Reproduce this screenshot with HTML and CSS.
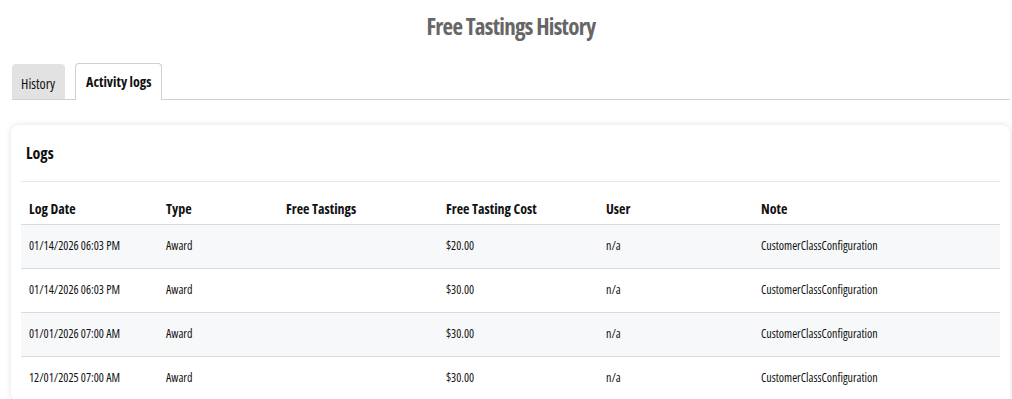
FILE: index.html
```html
<!DOCTYPE html>
<html>
<head>
    <meta charset="utf-8">
    <meta name="viewport" content="width=device-width, initial-scale=1">
    <title>Free Tastings History</title>
    <link rel="stylesheet" href="styles.css">
</head>
<body>
    <h1 class="page-title">Free Tastings History</h1>

    <div class="tabs">
        <div class="tab">History</div>
        <div class="tab active">Activity logs</div>
    </div>

    <div class="card">
        <h2 class="card-title">Logs</h2>
        <table class="logs">
            <thead>
                <tr>
                    <th class="c-date">Log Date</th>
                    <th class="c-type">Type</th>
                    <th class="c-free">Free Tastings</th>
                    <th class="c-cost">Free Tasting Cost</th>
                    <th class="c-user">User</th>
                    <th>Note</th>
                </tr>
            </thead>
            <tbody>
                <tr>
                    <td>01/14/2026 06:03 PM</td>
                    <td>Award</td>
                    <td></td>
                    <td>$20.00</td>
                    <td>n/a</td>
                    <td>CustomerClassConfiguration</td>
                </tr>
                <tr>
                    <td>01/14/2026 06:03 PM</td>
                    <td>Award</td>
                    <td></td>
                    <td>$30.00</td>
                    <td>n/a</td>
                    <td>CustomerClassConfiguration</td>
                </tr>
                <tr>
                    <td>01/01/2026 07:00 AM</td>
                    <td>Award</td>
                    <td></td>
                    <td>$30.00</td>
                    <td>n/a</td>
                    <td>CustomerClassConfiguration</td>
                </tr>
                <tr>
                    <td>12/01/2025 07:00 AM</td>
                    <td>Award</td>
                    <td></td>
                    <td>$30.00</td>
                    <td>n/a</td>
                    <td>CustomerClassConfiguration</td>
                </tr>
            </tbody>
        </table>
    </div>
</body>
</html>
```

FILE: styles.css
```css
body {
    margin: 0;
    padding: 0 2px 0 12px;
    background-color: #fff;
    color: #111;
    font-family: "Open Sans", sans-serif;
    font-stretch: 75%;
}

.page-title {
    margin: 0;
    padding-top: 10px;
    height: 63px;
    box-sizing: border-box;
    text-align: center;
    font-size: 23px;
    font-weight: 700;
    color: #666;
    letter-spacing: -0.7px;
}

.tabs {
    display: flex;
    gap: 10px;
    height: 36px;
    border-bottom: 1px solid #d0d0d0;
}

.tab {
    display: flex;
    align-items: center;
    margin-top: 1px;
    padding: 3px 10px 0 9px;
    font-size: 14px;
    background-color: #e2e2e2;
    border-radius: 4px 4px 0 0;
}

.tab.active {
    margin-top: 0;
    padding: 0 10px 2px;
    font-weight: 700;
    background-color: #fff;
    border: 1px solid #d0d0d0;
    border-bottom: none;
    margin-bottom: -1px;
}

.card {
    margin-top: 25px;
    margin-left: -1px;
    padding: 0 10px;
    background-color: #fff;
    border-radius: 8px;
    box-shadow: 0 0 6px rgba(0, 0, 0, 0.12);
}

.card-title {
    margin: 0;
    padding: 17px 5px 0;
    height: 57px;
    box-sizing: border-box;
    font-size: 16px;
    font-weight: 700;
    border-bottom: 1px solid #e6e8ec;
}

.logs {
    width: 100%;
    border-collapse: collapse;
}

.logs th {
    text-align: left;
    font-size: 14px;
    font-weight: 700;
    padding: 17px 8px 6px;
    border-bottom: 1px solid #d8dbe2;
}

.logs td {
    height: 41px;
    padding: 0 8px 2px;
    font-size: 12px;
    border-bottom: 1px solid #d8dbe2;
}

.logs tbody tr:nth-child(odd) {
    background-color: #f7f8fa;
}

.c-date { width: 121px; }
.c-type { width: 104px; }
.c-free { width: 144px; }
.c-cost { width: 144px; }
.c-user { width: 139px; }
```
